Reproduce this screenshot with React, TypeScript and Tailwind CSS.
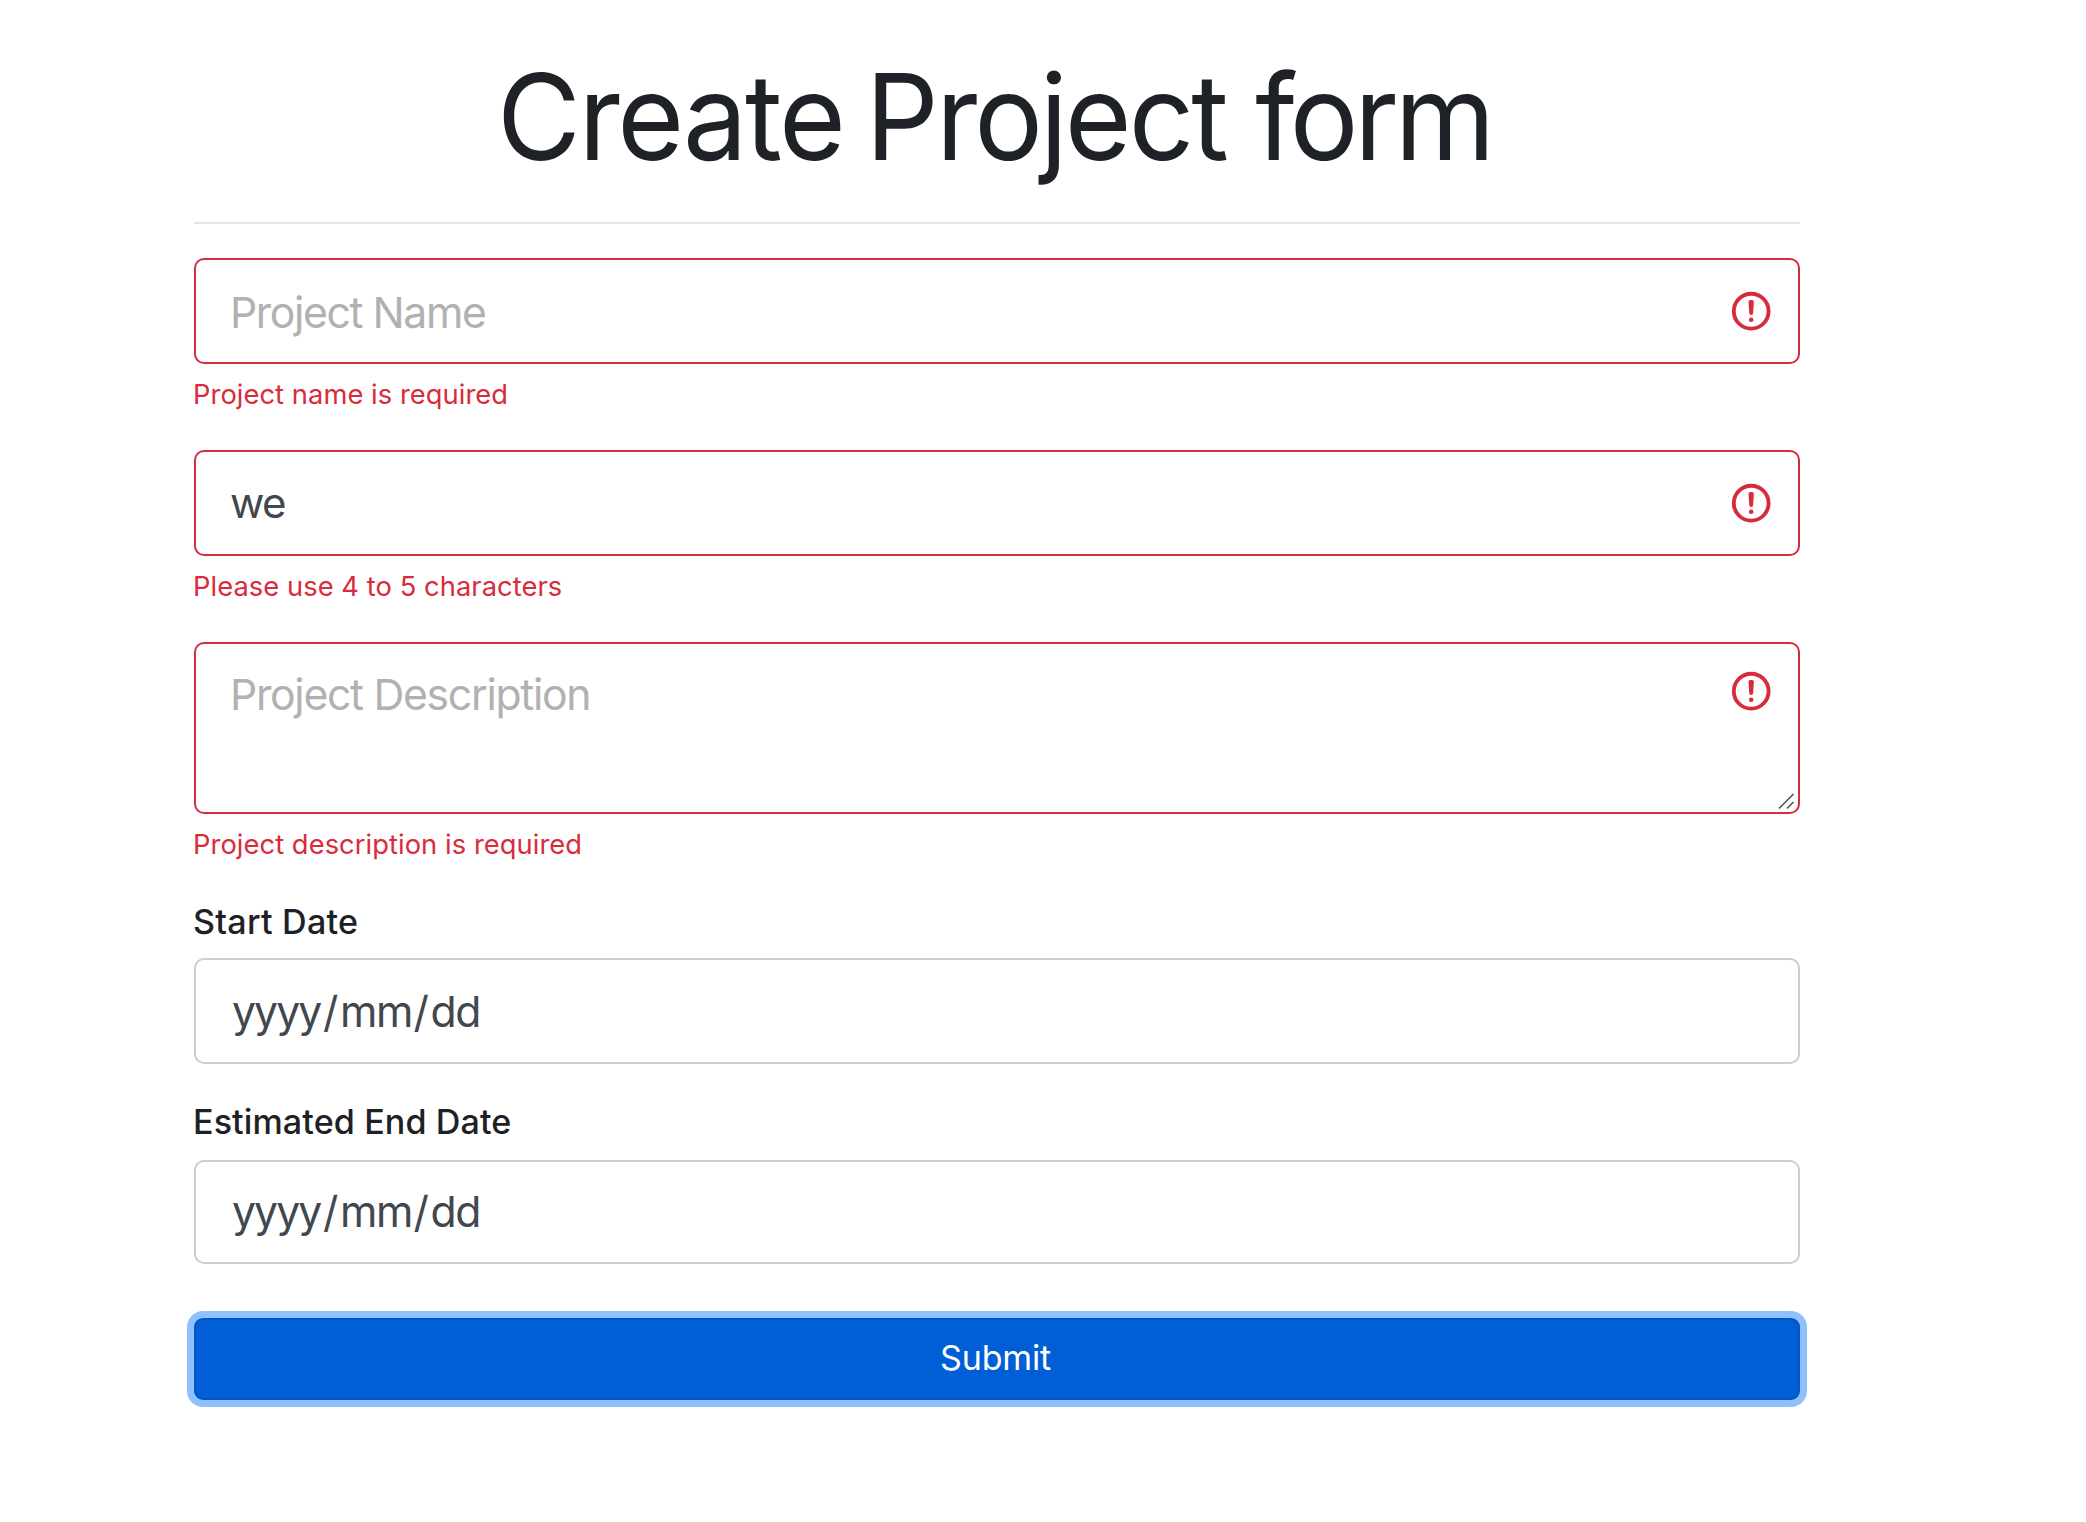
import type { ReactNode } from "react";

function AlertIcon({ className }: { className: string }) {
  return (
    <svg className={`absolute h-[46.4px] w-[46.4px] ${className}`} viewBox="0 0 12 12" fill="none" stroke="#d72c3b">
      <circle cx="6" cy="6" r="4.5" />
      <path strokeLinejoin="round" d="M5.8 3.6h.4L6 6.5z" />
      <circle cx="6" cy="8.2" r=".6" fill="#d72c3b" stroke="none" />
    </svg>
  );
}

function Feedback({ children, className }: { children: ReactNode; className: string }) {
  return (
    <p className={`mt-[10px] -ml-px h-[41px] whitespace-nowrap text-[27.3px] leading-[41px] text-[#d72c3b] ${className}`}>{children}</p>
  );
}

function DateField({ className }: { className: string }) {
  return (
    <div className={`flex items-center rounded-[10px] border-2 border-[#c8cdd6] pl-[36px] text-[42.7px] leading-none text-[#41474e] ${className}`}>
      <span className="w-[91px] tracking-[-1.9px]">yyyy</span>
      <span className="w-[17px]">/</span>
      <span className="w-[73.5px] tracking-[-1.4px]">mm</span>
      <span className="w-[17px]">/</span>
      <span className="tracking-[-1.4px]">dd</span>
    </div>
  );
}

export default function App() {
  return (
    <div className="min-h-[1522px] w-full bg-white font-['Inter',sans-serif] text-[#1e2226]">
      <form className="ml-[194px] flex w-[1606px] flex-col pt-[44px]" noValidate>
        <h1 className="ml-[303px] h-[145px] origin-left scale-x-[0.96] whitespace-nowrap text-[119.5px] leading-[145px] font-[430]">
          <span className="tracking-[-2.5px] [word-spacing:-8px]">Create </span>
          <span className="tracking-[-3.1px]">Project </span>
          <span className="tracking-[-4.6px]">form</span>
        </h1>
        <hr className="mt-[33px] h-[2px] border-0 bg-[#e5e5e5]" />

        <div className="relative mt-[34px]">
          <input
            type="text"
            placeholder="Project Name"
            className="block h-[106px] w-full rounded-[10px] border-2 border-[#d72c3b] pt-[3px] pl-[34px] text-[42.7px] tracking-[-1.4px] text-[#41474e] outline-none placeholder:text-[#b1b1b1]"
          />
          <AlertIcon className="top-[30px] right-[25.5px]" />
        </div>
        <Feedback className="tracking-[0.06px]">Project name is required</Feedback>

        <div className="relative mt-[35px]">
          <input
            type="text"
            defaultValue="we"
            className="block h-[106px] w-full rounded-[10px] border-2 border-[#d72c3b] pb-[2px] pl-[34px] text-[42px] tracking-[-1.6px] text-[#41474e] outline-none"
          />
          <AlertIcon className="top-[30px] right-[25.5px]" />
        </div>
        <Feedback className="tracking-[0.06px]">Please use 4 to 5 characters</Feedback>

        <div className="relative mt-[35px]">
          <textarea
            placeholder="Project Description"
            className="block h-[172px] w-full resize-none rounded-[10px] border-2 border-[#d72c3b] pt-[19px] pl-[34px] text-[42.7px] leading-[64px] tracking-[-1.29px] text-[#41474e] outline-none placeholder:text-[#b1b1b1]"
          />
          <AlertIcon className="top-[26px] right-[25.5px]" />
          <svg className="absolute right-[5px] bottom-[4px] h-[17px] w-[17px]" viewBox="0 0 17 17" fill="none" stroke="#555" strokeWidth="1.6">
            <path d="M1 15.5 15.5 1M9 15.5l6.5-6.5" />
          </svg>
        </div>
        <Feedback className="tracking-[0.065px]">Project description is required</Feedback>

        <label className="mt-[30px] -ml-px h-[53px] text-[34.1px] leading-[53px] font-medium tracking-[0.25px]">Start Date</label>
        <DateField className="mt-[10px] h-[106px] pt-[2px]" />

        <label className="mt-[31px] -ml-px h-[53px] text-[34.1px] leading-[53px] font-medium tracking-[0.1px]">Estimated End Date</label>
        <DateField className="mt-[12px] h-[104px]" />

        <button
          type="button"
          className="mt-[54px] h-[82px] rounded-[9px] border-2 border-[#0056c5] bg-[#005ed6] pr-[3px] pb-px text-[34.1px] leading-none tracking-[-0.2px] text-white shadow-[0_0_0_7px_#8fc1ff]"
        >
          Submit
        </button>
      </form>
    </div>
  );
}
